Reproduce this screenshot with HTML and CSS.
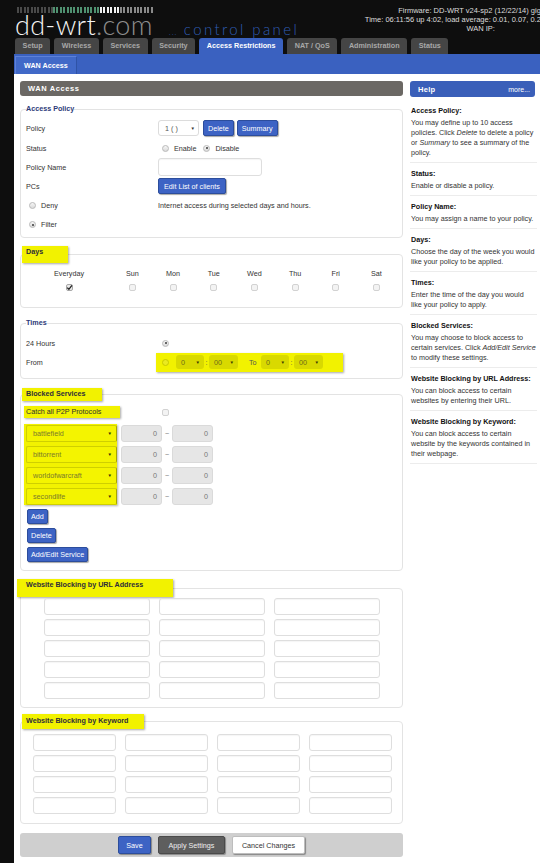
FILE: index.html
```html
<!DOCTYPE html>
<html lang="en">
<head>
<meta charset="utf-8">
<title>DD-WRT Control Panel - Access Restrictions</title>
<link rel="stylesheet" href="styles.css">
</head>
<body>
<div class="page">
  <header class="header">
    <div class="brand">
      <div class="bars"><span class="b-dim"></span><span class="b-green"></span><span class="b-white"></span><span class="b-gray"></span></div>
      <div class="brand-line">
        <span class="logo-dd">dd-wrt</span><span class="logo-com">.com</span>
        <span class="cp"><span class="cp-dots">...</span> control panel</span>
      </div>
    </div>
    <div class="info">
      <div>Firmware: DD-WRT v24-sp2 (12/22/14) giga</div>
      <div>Time: 06:11:56 up 4:02, load average: 0.01, 0.07, 0.21</div>
      <div>WAN IP: <span class="ip-mask"></span></div>
    </div>
  </header>

  <nav class="tabs">
    <span class="tab">Setup</span>
    <span class="tab">Wireless</span>
    <span class="tab">Services</span>
    <span class="tab">Security</span>
    <span class="tab active">Access Restrictions</span>
    <span class="tab">NAT / QoS</span>
    <span class="tab">Administration</span>
    <span class="tab">Status</span>
  </nav>
  <div class="subnav"><span class="subtab">WAN Access</span></div>

  <main class="main">
    <section class="left">
      <h2 class="panel-title">WAN Access</h2>

      <fieldset class="fs fs-policy">
        <legend>Access Policy</legend>
        <div class="form-grid fg-policy">
          <div class="lbl">Policy</div>
          <div class="ctrl">
            <span class="select sel-policy"><span>1 ( )</span><span class="arrow">▼</span></span>
            <button class="btn b-del">Delete</button>
            <button class="btn b-sum">Summary</button>
          </div>
          <div class="lbl">Status</div>
          <div class="ctrl ctrl-radios">
            <span class="radio"></span><span class="rlabel">Enable</span>
            <span class="radio on"></span><span class="rlabel">Disable</span>
          </div>
          <div class="lbl">Policy Name</div>
          <div class="ctrl"><input class="txt txt-name" type="text"></div>
          <div class="lbl">PCs</div>
          <div class="ctrl"><button class="btn b-wide">Edit List of clients</button></div>
          <div class="lbl opt"><span class="radio"></span><span class="rlabel">Deny</span></div>
          <div class="ctrl">Internet access during selected days and hours.</div>
          <div class="lbl opt"><span class="radio on"></span><span class="rlabel">Filter</span></div>
          <div></div>
        </div>
      </fieldset>

      <fieldset class="fs fs-days">
        <legend class="hl lg-days">Days</legend>
        <div class="days">
          <span>Everyday</span><span>Sun</span><span>Mon</span><span>Tue</span><span>Wed</span><span>Thu</span><span>Fri</span><span>Sat</span>
          <span class="check on"><svg width="7" height="7" viewBox="0 0 7 7"><path d="M1.2 3.6 L2.9 5.3 L5.9 1.4" stroke="#222" stroke-width="1.3" fill="none"/></svg></span>
          <span class="check"></span><span class="check"></span><span class="check"></span><span class="check"></span><span class="check"></span><span class="check"></span><span class="check"></span>
        </div>
      </fieldset>

      <fieldset class="fs fs-times">
        <legend>Times</legend>
        <div class="form-grid fg-times">
          <div class="lbl">24 Hours</div>
          <div class="ctrl ctrl-pad"><span class="radio on"></span></div>
          <div class="lbl">From</div>
          <div class="ctrl">
            <div class="time-hl">
              <span class="radio r-hl"></span>
              <span class="tsel t-h"><span>0</span><span class="arrow">▼</span></span>
              <span class="colon">:</span>
              <span class="tsel t-m"><span>00</span><span class="arrow">▼</span></span>
              <span class="to">To</span>
              <span class="tsel t-h"><span>0</span><span class="arrow">▼</span></span>
              <span class="colon">:</span>
              <span class="tsel t-m"><span>00</span><span class="arrow">▼</span></span>
            </div>
          </div>
        </div>
      </fieldset>

      <fieldset class="fs fs-blocked">
        <legend class="hl lg-blocked">Blocked Services</legend>
        <div class="catch-row">
          <span class="catch">Catch all P2P Protocols</span>
          <span class="check"></span>
        </div>
        <div class="services">
          <div class="svc-col">
            <span class="svc-sel"><span>battlefield</span><span class="arrow">▼</span></span>
            <span class="svc-sel"><span>bittorrent</span><span class="arrow">▼</span></span>
            <span class="svc-sel"><span>worldofwarcraft</span><span class="arrow">▼</span></span>
            <span class="svc-sel"><span>secondlife</span><span class="arrow">▼</span></span>
          </div>
          <div class="ports">
            <div class="port-row"><span class="port">0</span><span class="tilde">~</span><span class="port">0</span></div>
            <div class="port-row"><span class="port">0</span><span class="tilde">~</span><span class="port">0</span></div>
            <div class="port-row"><span class="port">0</span><span class="tilde">~</span><span class="port">0</span></div>
            <div class="port-row"><span class="port">0</span><span class="tilde">~</span><span class="port">0</span></div>
          </div>
        </div>
        <div class="svc-btns">
          <button class="btn sbtn">Add</button>
          <button class="btn sbtn">Delete</button>
          <button class="btn sbtn">Add/Edit Service</button>
        </div>
      </fieldset>

      <fieldset class="fs fs-url">
        <legend class="hl lg-url">Website Blocking by URL Address</legend>
        <div class="url-grid">
          <input class="txt" type="text"><input class="txt" type="text"><input class="txt" type="text">
          <input class="txt" type="text"><input class="txt" type="text"><input class="txt" type="text">
          <input class="txt" type="text"><input class="txt" type="text"><input class="txt" type="text">
          <input class="txt" type="text"><input class="txt" type="text"><input class="txt" type="text">
          <input class="txt" type="text"><input class="txt" type="text"><input class="txt" type="text">
        </div>
      </fieldset>

      <fieldset class="fs fs-kw">
        <legend class="hl lg-kw">Website Blocking by Keyword</legend>
        <div class="kw-grid">
          <input class="txt" type="text"><input class="txt" type="text"><input class="txt" type="text"><input class="txt" type="text">
          <input class="txt" type="text"><input class="txt" type="text"><input class="txt" type="text"><input class="txt" type="text">
          <input class="txt" type="text"><input class="txt" type="text"><input class="txt" type="text"><input class="txt" type="text">
          <input class="txt" type="text"><input class="txt" type="text"><input class="txt" type="text"><input class="txt" type="text">
        </div>
      </fieldset>

      <div class="actions">
        <button class="abtn save">Save</button>
        <button class="abtn apply">Apply Settings</button>
        <button class="abtn cancel">Cancel Changes</button>
      </div>
    </section>

    <aside class="help">
      <div class="help-head"><span class="help-title">Help</span><span class="help-more">more...</span></div>
      <div class="help-sec first">
        <h3>Access Policy:</h3>
        <p>You may define up to 10 access policies. Click <em>Delete</em> to delete a policy or <em>Summary</em> to see a summary of the policy.</p>
      </div>
      <div class="help-sec">
        <h3>Status:</h3>
        <p>Enable or disable a policy.</p>
      </div>
      <div class="help-sec">
        <h3>Policy Name:</h3>
        <p>You may assign a name to your policy.</p>
      </div>
      <div class="help-sec">
        <h3>Days:</h3>
        <p>Choose the day of the week you would like your policy to be applied.</p>
      </div>
      <div class="help-sec">
        <h3>Times:</h3>
        <p>Enter the time of the day you would<br>like your policy to apply.</p>
      </div>
      <div class="help-sec">
        <h3>Blocked Services:</h3>
        <p>You may choose to block access to certain services. Click <em class="nw">Add/Edit Service</em> to modify these settings.</p>
      </div>
      <div class="help-sec">
        <h3>Website Blocking by URL Address:</h3>
        <p>You can block access to certain websites by entering their URL.</p>
      </div>
      <div class="help-sec">
        <h3>Website Blocking by Keyword:</h3>
        <p>You can block access to certain<br>website by the keywords contained in their webpage.</p>
      </div>
    </aside>
  </main>
</div>
</body>
</html>
```

FILE: styles.css
```css
* { box-sizing: border-box; }
html, body { margin: 0; padding: 0; overflow: hidden; }
body {
  background: #0e0e0e;
  font-family: "Liberation Sans", Arial, sans-serif;
  font-size: 7.2px;
  color: #333;
}
.page { width: 566px; margin-left: 14px; }

/* header */
.header { height: 38px; display: flex; justify-content: space-between; }
.brand { padding: 7px 0 0 1px; }
.bars { display: flex; height: 6px; margin-left: 2px; }
.bars span { height: 6px; display: block; }
.b-dim { width: 36px; background: repeating-linear-gradient(90deg, #4a4a4a 0 2px, transparent 2px 3.4px); }
.b-green { width: 47px; background: repeating-linear-gradient(90deg, #4f9170 0 2px, transparent 2px 3.4px); }
.b-white { width: 20px; background: repeating-linear-gradient(90deg, #f0f0f0 0 2px, transparent 2px 3.4px); }
.b-gray { width: 33px; background: repeating-linear-gradient(90deg, #8a8a8a 0 2px, transparent 2px 3.4px); }
.brand-line { display: flex; align-items: baseline; white-space: nowrap; height: 23px; padding-top: 1px; }
.logo-dd, .logo-com {
  font-family: Lato, "Open Sans", sans-serif;
  font-weight: 300;
  font-size: 27px;
  line-height: 22px;
  letter-spacing: 0.3px;
}
.logo-dd { color: #f4f4f4; }
.logo-com { color: #8e8e8e; }
.cp {
  font-family: Lato, "Open Sans", sans-serif;
  font-weight: 300;
  font-size: 15px;
  color: #2f5db4;
  letter-spacing: 2.4px;
  margin-left: 16px;
}
.cp-dots { font-size: 8px; letter-spacing: 1px; }
.info {
  padding: 6px 35px 0 0;
  text-align: right;
  color: #dcdcdc;
  font-size: 7.5px;
  line-height: 9px;
  white-space: nowrap;
}
.ip-mask { display: inline-block; width: 48px; }

/* tabs */
.tabs { display: flex; gap: 4px; height: 16px; padding-left: 1px; }
.tab {
  background: #454545;
  color: #a8a8a8;
  font-weight: bold;
  line-height: 16px;
  padding: 0 7.6px;
  border-radius: 3px 3px 0 0;
  white-space: nowrap;
}
.tab.active { background: #3a61c0; color: #fff; }
.subnav {
  height: 20px;
  background: #3a61c0;
  display: flex;
  align-items: flex-end;
  padding-left: 1px;
}
.subtab {
  height: 18px;
  line-height: 17px;
  padding: 0 8px;
  color: #fff;
  font-weight: bold;
  background: #4169c8;
  border-top: 1px solid #5d81d8;
  border-left: 1px solid #5d81d8;
  border-right: 1px solid #2f53a6;
}

/* main */
.main {
  background: #fff;
  display: flex;
  gap: 7px;
  padding: 7px 0 0 6px;
  height: 789px;
}
.left { width: 383px; flex: none; }
.help { width: 127px; flex: none; }

.panel-title {
  margin: 0;
  height: 15px;
  background: #6b6864;
  border-radius: 3px;
  color: #fff;
  font-size: 7.5px;
  font-weight: bold;
  line-height: 15px;
  padding-left: 8px;
  letter-spacing: 0.6px;
}

/* fieldsets */
.fs {
  margin: 8px 0 0;
  padding: 4px 5px 3px;
  border: 1px solid #e3e3e3;
  border-radius: 4px;
  min-width: 0;
}
.fs legend {
  padding: 0;
  font-weight: bold;
  font-size: 7.2px;
  line-height: 10px;
  color: #2d3a78;
}
.fs legend.hl {
  background: #f2f200;
  color: #2e2e3a;
  box-shadow: 1px 1px 2px rgba(0, 0, 0, 0.35);
}
.lg-days { margin-left: -4px; padding: 1px 25px 6px 4px !important; }
.lg-blocked { margin-left: -4px; padding: 1px 16px 2px 4px !important; }
.lg-url { margin-left: -9px; padding: 1px 30px 7px 9px !important; }
.lg-kw { margin-left: -4px; padding: 2px 15px 3px 4px !important; }

.fs-days { margin-top: 8px; padding: 5px 5px 11px; }
.fs-times { margin-top: 10px; padding: 6px 5px 6px; }
.fs-blocked { margin-top: 9px; padding: 5px 5px 8px; }
.fs-url { margin-top: 8px; padding: 1px 5px 8px; }
.fs-kw { margin-top: 6px; padding: 5px 5px 9px; }

.form-grid { display: grid; grid-template-columns: 132px 1fr; align-items: center; }
.fg-policy { grid-template-rows: 20px 20px 18px 20px 19px 19px; }
.fg-times { grid-template-rows: 18px 20px; }
.lbl { color: #333; }
.lbl.opt { display: flex; align-items: center; padding-left: 3px; }
.ctrl { display: flex; align-items: center; }
.ctrl-radios { padding-left: 4px; }
.ctrl-pad { padding-left: 4px; }
.rlabel { margin-left: 5px; margin-right: 7px; }

.select {
  display: inline-flex;
  align-items: center;
  justify-content: space-between;
  height: 16px;
  border: 1px solid #dcdcdc;
  border-radius: 3px;
  background: #fff;
  color: #555;
  padding: 0 3px 0 6px;
}
.sel-policy { width: 41px; margin-right: 4px; }
.arrow { font-size: 4.5px; color: #333; }

.btn {
  font-family: "Liberation Sans", Arial, sans-serif;
  font-size: 7.2px;
  height: 16px;
  padding: 0 4px;
  margin: 0;
  background: #3d63c4;
  color: #fff;
  border: 1px solid #2c4d9c;
  border-radius: 2px;
  box-shadow: 1px 1px 1px rgba(0, 0, 0, 0.35);
  white-space: nowrap;
}
.b-del { margin-right: 3px; }
.b-wide { padding: 0 5px; }

.txt {
  display: block;
  width: 100%;
  height: 17px;
  margin: 0;
  padding: 0;
  border: 1px solid #dedede;
  border-radius: 3px;
  background: #fff;
  box-shadow: inset 0 1px 1px rgba(0, 0, 0, 0.04);
}
.txt-name { width: 104px; height: 18px; }

.radio {
  display: inline-block;
  flex: none;
  position: relative;
  width: 7px;
  height: 7px;
  border-radius: 50%;
  border: 1px solid #b9b9b9;
  background: linear-gradient(#f6f6f6, #dadada);
}
.radio.on::after {
  content: "";
  position: absolute;
  left: 1.5px;
  top: 1.5px;
  width: 2px;
  height: 2px;
  border-radius: 50%;
  background: #3a3a3a;
}
.check {
  display: inline-flex;
  align-items: center;
  justify-content: center;
  width: 7px;
  height: 7px;
  border: 1px solid #d2d2d2;
  border-radius: 2px;
  background: #f3f3f3;
}
.check.on { border-color: #a8a8a8; background: #e9e9e9; }
.check svg { display: block; flex: none; }

/* days */
.days {
  display: grid;
  grid-template-columns: 86px repeat(7, 40.7px);
  grid-template-rows: 10px 18px;
  align-items: center;
  justify-items: center;
  color: #333;
}

/* times */
.time-hl {
  display: flex;
  align-items: center;
  margin-left: -2px;
  width: 187px;
  height: 19px;
  background: #f2f200;
  box-shadow: 1px 1px 2px rgba(0, 0, 0, 0.35);
  padding-left: 6px;
}
.r-hl { border-color: #c9c900; background: #eaea20; margin-right: 7px; }
.tsel {
  display: inline-flex;
  align-items: center;
  justify-content: space-between;
  height: 14px;
  border-radius: 3px;
  background: #d9d900;
  color: #6d6d1a;
  padding: 0 4px 0 5px;
}
.tsel .arrow { color: #3a3a00; }
.t-h { width: 28px; }
.t-m { width: 29px; }
.colon { width: 5px; text-align: center; color: #555; }
.to { margin: 0 2px 0 11px; width: 10px; color: #555; }

/* blocked services */
.catch-row { display: flex; align-items: center; height: 12px; }
.catch {
  margin-left: -2px;
  width: 96px;
  height: 12px;
  line-height: 12px;
  padding-left: 2px;
  background: #f2f200;
  color: #2e2e2e;
  box-shadow: 1px 1px 2px rgba(0, 0, 0, 0.35);
  white-space: nowrap;
}
.catch-row .check { margin-left: 42px; }
.services { display: flex; gap: 4px; margin-top: 6px; }
.svc-col {
  display: flex;
  flex-direction: column;
  gap: 4px;
  margin-left: -2px;
  padding: 1px 0 0 2px;
  background: #f2f200;
  box-shadow: 1px 1px 2px rgba(0, 0, 0, 0.3);
}
.svc-sel {
  display: flex;
  align-items: center;
  justify-content: space-between;
  width: 91px;
  height: 17px;
  border: 1px solid #cfcf00;
  border-right-color: #a6a600;
  border-radius: 2px;
  background: #f4f400;
  color: #7a7a2c;
  padding: 0 4px 0 6px;
}
.svc-sel .arrow { color: #2e2e00; }
.ports { display: flex; flex-direction: column; gap: 4px; padding-top: 1px; }
.port-row { display: flex; align-items: center; height: 17px; }
.port {
  width: 41px;
  height: 17px;
  line-height: 15px;
  text-align: right;
  padding-right: 4px;
  background: #e6e6e6;
  border: 1px solid #dadada;
  border-radius: 3px;
  color: #777;
}
.tilde { width: 10px; text-align: center; color: #777; }
.svc-btns {
  display: flex;
  flex-direction: column;
  align-items: flex-start;
  gap: 4px;
  margin-top: 4px;
  padding-left: 1px;
}
.sbtn { height: 15px; padding: 0 3px; }

/* url / keyword grids */
.url-grid {
  display: grid;
  grid-template-columns: repeat(3, 106px);
  column-gap: 9px;
  row-gap: 4px;
  margin-left: 18px;
}
.kw-grid {
  display: grid;
  grid-template-columns: repeat(4, 83px);
  column-gap: 9px;
  row-gap: 4px;
  margin-left: 7px;
}

/* actions */
.actions {
  margin-top: 9px;
  height: 24px;
  background: #cfcfcf;
  border-radius: 3px;
  display: flex;
  justify-content: center;
  align-items: center;
  gap: 7px;
}
.abtn {
  font-family: "Liberation Sans", Arial, sans-serif;
  font-size: 7.2px;
  height: 18px;
  margin: 0;
  padding: 0;
  border-radius: 2px;
  box-shadow: 1px 1px 1px rgba(0, 0, 0, 0.35);
  white-space: nowrap;
}
.save { width: 33px; background: #3d63c4; color: #fff; border: 1px solid #2c4d9c; }
.apply { width: 67px; background: #5e5e5e; color: #eee; border: 1px solid #4a4a4a; }
.cancel { width: 73px; background: #fff; color: #333; border: 1px solid #bdbdbd; }

/* help */
.help-head {
  height: 16px;
  margin-right: 2px;
  background: #3a5fb9;
  border-radius: 3px;
  display: flex;
  justify-content: space-between;
  align-items: center;
  color: #fff;
  padding: 0 5px 0 8px;
}
.help-title { font-weight: bold; font-size: 7.5px; letter-spacing: 0.3px; }
.help-more { font-size: 7px; }
.help-sec { padding: 5px 0 4px 1px; border-bottom: 1px solid #ececec; }
.help-sec.first { margin-top: 3px; }
.help-sec h3 {
  margin: 0 0 1px;
  font-size: 7.2px;
  line-height: 12px;
  font-weight: bold;
  color: #111;
  white-space: nowrap;
}
.help-sec p { margin: 0; line-height: 10px; color: #333; }
.help-sec em { font-style: italic; }
.help-sec em.nw { white-space: nowrap; }
```
